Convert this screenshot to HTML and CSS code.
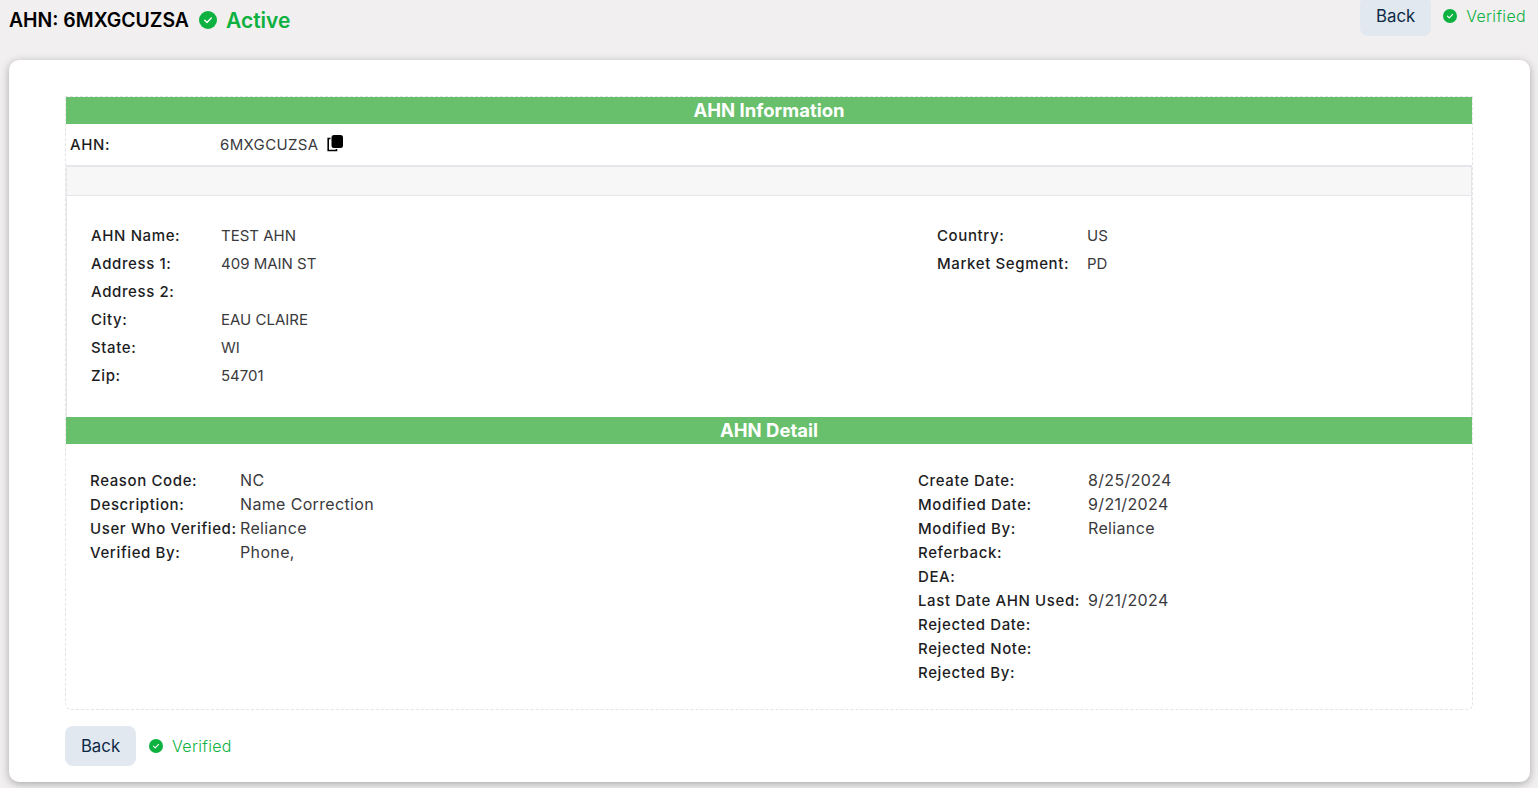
FILE: index.html
```html
<!DOCTYPE html>
<html lang="en">
<head>
<meta charset="utf-8">
<title>AHN Detail</title>
<link rel="stylesheet" href="styles.css">
</head>
<body>
<svg class="defs" width="0" height="0" aria-hidden="true">
  <symbol id="check" viewBox="0 0 20 20">
    <circle cx="10" cy="10" r="10" fill="#0db13f"/>
    <path d="M6.300 10.200l2.600 2.600 4.800-5" fill="none" stroke="#fff" stroke-width="1.500" stroke-linecap="round" stroke-linejoin="round"/>
  </symbol>
</svg>
<header class="topbar">
  <div class="title">
    <h1>AHN: 6MXGCUZSA</h1>
    <svg class="icon-lg"><use href="#check"/></svg>
    <span class="active">Active</span>
  </div>
  <div class="actions">
    <button class="back">Back</button>
    <svg class="icon-sm"><use href="#check"/></svg>
    <span class="verified">Verified</span>
  </div>
</header>
<main class="card">
  <div class="box">
    <div class="band">AHN Information</div>
    <div class="ahn-row">
      <span class="label ahn-label">AHN:</span>
      <span class="value ahn-value">6MXGCUZSA</span>
      <svg class="copy" viewBox="0 0 16 17">
        <path d="M3.500 3.500H1.200v12h8.300v-1.600" fill="none" stroke="#000" stroke-width="1.600"/>
        <path d="M7 0h6.500a2.500 2.500 0 0 1 2.500 2.500V10.500a2.500 2.500 0 0 1-2.500 2.500H7a2.500 2.500 0 0 1-2.500-2.500V2.500A2.500 2.500 0 0 1 7 0z" fill="#000"/>
      </svg>
    </div>
    <div class="strip"></div>
    <section class="info">
      <div class="col col-info">
        <span class="label">AHN Name:</span><span class="value">TEST AHN</span>
        <span class="label">Address 1:</span><span class="value">409 MAIN ST</span>
        <span class="label">Address 2:</span><span class="value"></span>
        <span class="label">City:</span><span class="value">EAU CLAIRE</span>
        <span class="label">State:</span><span class="value">WI</span>
        <span class="label">Zip:</span><span class="value">54701</span>
      </div>
      <div class="col col-info-r">
        <span class="label">Country:</span><span class="value">US</span>
        <span class="label">Market Segment:</span><span class="value">PD</span>
      </div>
    </section>
    <div class="band">AHN Detail</div>
    <section class="detail">
      <div class="col col-detail">
        <span class="label">Reason Code:</span><span class="value">NC</span>
        <span class="label">Description:</span><span class="value">Name Correction</span>
        <span class="label">User Who Verified:</span><span class="value">Reliance</span>
        <span class="label">Verified By:</span><span class="value">Phone,</span>
      </div>
      <div class="col col-detail-r">
        <span class="label">Create Date:</span><span class="value">8/25/2024</span>
        <span class="label">Modified Date:</span><span class="value">9/21/2024</span>
        <span class="label">Modified By:</span><span class="value">Reliance</span>
        <span class="label">Referback:</span><span class="value"></span>
        <span class="label">DEA:</span><span class="value"></span>
        <span class="label">Last Date AHN Used:</span><span class="value">9/21/2024</span>
        <span class="label">Rejected Date:</span><span class="value"></span>
        <span class="label">Rejected Note:</span><span class="value"></span>
        <span class="label">Rejected By:</span><span class="value"></span>
      </div>
    </section>
  </div>
  <div class="footer">
    <button class="back">Back</button>
    <svg class="icon-sm"><use href="#check"/></svg>
    <span class="verified">Verified</span>
  </div>
</main>
</body>
</html>
```
FILE: styles.css
```css
* { box-sizing: border-box; }
html, body { height: 100%; }
body {
  margin: 0;
  padding: 0 8px 0 9px;
  background: #f1eff0;
  font-family: Inter, "Liberation Sans", sans-serif;
  font-size: 15px;
  color: #212529;
  overflow: hidden;
}
.defs { position: absolute; }
.topbar {
  height: 60px;
  display: flex;
  justify-content: space-between;
  align-items: flex-start;
  padding-right: 4px;
}
.title {
  display: flex;
  align-items: center;
  height: 40px;
}
h1 {
  margin: 0;
  font-size: 19.400px;
  font-weight: 600;
  color: #000;
}
.icon-lg { width: 18px; height: 18px; margin: 0 9px 0 10px; }
.active { font-size: 21px; font-weight: 600; color: #0db13f; }
.actions {
  display: flex;
  align-items: center;
  height: 40px;
  margin-top: -4px;
}
.back {
  width: 71px;
  height: 40px;
  padding: 0 0 1px;
  border: 0;
  border-radius: 8px;
  background: #e1e8f0;
  color: #0f2a47;
  font: 400 16.800px Inter, "Liberation Sans", sans-serif;
}
.icon-sm { width: 14px; height: 14px; margin: 0 9px 0 13px; }
.verified { font-size: 16px; font-weight: 300; letter-spacing: .35px; color: #0db13f; }
.actions .icon-sm { margin-left: 12px; }
.card {
  height: 722px;
  background: #fff;
  border-radius: 10px;
  box-shadow: 0 2px 8px rgba(0, 0, 0, .3);
  padding: 36px 57px 0 56px;
}
.box {
  height: 614px;
  border: 1px dashed #e4e4e7;
  border-radius: 0 0 6px 6px;
}
.band {
  height: 27px;
  background: #69c06c;
  color: #fff;
  font-size: 18.500px;
  font-weight: 700;
  line-height: 27px;
  text-align: center;
}
.ahn-row {
  height: 41px;
  display: flex;
  align-items: center;
  padding: 0 0 0 4px;
}
.ahn-label { width: 150px; }
.ahn-value { letter-spacing: .35px; }
.copy { width: 16px; height: 17px; margin: -2px 0 0 9px; }
.strip {
  height: 31px;
  background: #f7f7f7;
  border: 1px solid #e6e6ea;
  border-top-width: 2px;
}
.info {
  height: 221px;
  display: grid;
  grid-template-columns: 846px 1fr;
  padding: 25px 0 0 24px;
  border-left: 1px solid #e6e6ea;
  border-right: 1px solid #e6e6ea;
}
.detail {
  display: grid;
  grid-template-columns: 828px 1fr;
  padding: 24px 0 0 24px;
}
.col { display: grid; align-content: start; justify-content: start; }
.col-info { grid-template-columns: 130px auto; grid-auto-rows: 28px; }
.col-info-r { grid-template-columns: 150px auto; grid-auto-rows: 28px; }
.col-detail { grid-template-columns: 150px auto; grid-auto-rows: 24px; }
.col-detail-r { grid-template-columns: 170px auto; grid-auto-rows: 24px; }
.label { color: #1d1d1f; font-weight: 450; letter-spacing: .62px; white-space: nowrap; line-height: 1; align-self: center; }
.value { color: #3a3a3d; white-space: nowrap; line-height: 1; align-self: center; }
.detail .value { font-size: 16px; letter-spacing: .35px; }
.footer {
  display: flex;
  align-items: center;
  margin-top: 16px;
}
```
